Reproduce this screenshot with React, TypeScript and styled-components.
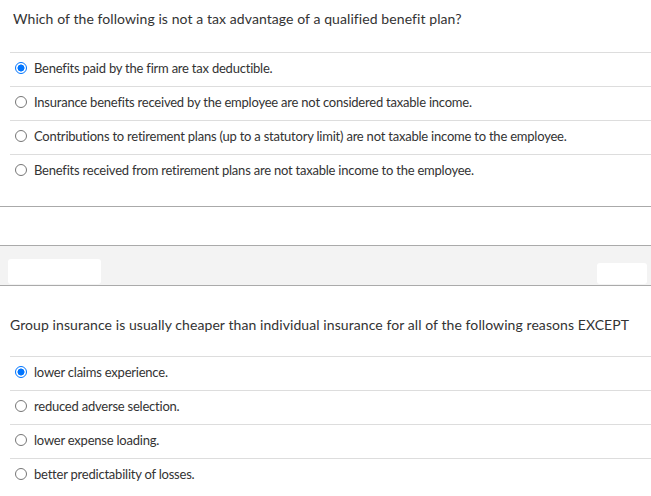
import styled, { createGlobalStyle } from "styled-components";

const Global = createGlobalStyle`
  body {
    margin: 0;
    background: #fff;
    font-family: Lato, "Open Sans", sans-serif;
    color: #333;
  }
`;

type Question = {
  text: string;
  options: string[];
  selected: number;
};

const questions: Question[] = [
  {
    text: "Which of the following is not a tax advantage of a qualified benefit plan?",
    options: [
      "Benefits paid by the firm are tax deductible.",
      "Insurance benefits received by the employee are not considered taxable income.",
      "Contributions to retirement plans (up to a statutory limit) are not taxable income to the employee.",
      "Benefits received from retirement plans are not taxable income to the employee.",
    ],
    selected: 0,
  },
  {
    text: "Group insurance is usually cheaper than individual insurance for all of the following reasons EXCEPT",
    options: [
      "lower claims experience.",
      "reduced adverse selection.",
      "lower expense loading.",
      "better predictability of losses.",
    ],
    selected: 0,
  },
];

export default function App() {
  const [first, second] = questions;
  return (
    <>
      <Global />
      <Page>
        <QuestionBlock question={first} indent={13} top={9} height={52} />
        <Spacer />
        <Band>
          <Redact $width={93} $height={25} />
          <Redact $width={50} $height={21} />
        </Band>
        <QuestionBlock question={second} indent={10} top={29} height={70} />
      </Page>
    </>
  );
}

const QuestionBlock = ({
  question,
  indent,
  top,
  height,
}: {
  question: Question;
  indent: number;
  top: number;
  height: number;
}) => (
  <Block>
    <Prompt $indent={indent} $top={top} $height={height}>
      {question.text}
    </Prompt>
    <Options>
      {question.options.map((opt, i) => (
        <Option key={opt}>
          <Radio $checked={i === question.selected} />
          <span>{opt}</span>
        </Option>
      ))}
    </Options>
  </Block>
);

const Page = styled.div`
  display: flex;
  flex-direction: column;
  width: 651px;
`;

const Block = styled.section`
  display: flex;
  flex-direction: column;
`;

const Prompt = styled.p<{ $indent: number; $top: number; $height: number }>`
  margin: 0;
  padding: ${(p) => p.$top}px 0 0 ${(p) => p.$indent}px;
  height: ${(p) => p.$height}px;
  box-sizing: border-box;
  font-size: 14px;
  letter-spacing: 0.08px;
  line-height: 20px;
  color: #333;
`;

const Options = styled.ul`
  list-style: none;
  margin: 0 0 0 10px;
  padding: 0;
  border-top: 1px solid #ddd;
`;

const Option = styled.li`
  display: flex;
  align-items: center;
  gap: 7px;
  height: 33px;
  box-sizing: border-box;
  padding: 0 0 4px 5px;
  font-size: 13px;
  letter-spacing: -0.22px;
  color: #333;
  & + & {
    height: 34px;
    border-top: 1px solid #ddd;
  }
`;

const Radio = styled.span<{ $checked: boolean }>`
  flex: none;
  width: 12px;
  height: 12px;
  box-sizing: border-box;
  border-radius: 50%;
  border: 1px solid ${(p) => (p.$checked ? "#0075ff" : "#767676")};
  background: ${(p) =>
    p.$checked ? "radial-gradient(circle, #0075ff 0 3.2px, #fff 3.8px)" : "#fff"};
`;

const Spacer = styled.div`
  height: 18px;
  margin-bottom: 38px;
  border-bottom: 1px solid #aaa;
`;

const Band = styled.div`
  display: flex;
  justify-content: space-between;
  align-items: flex-end;
  height: 38px;
  padding: 0 4px 1px 8px;
  background: #f3f3f3;
  border-top: 1px solid #aaa;
  border-bottom: 1px solid #aaa;
`;

const Redact = styled.div<{ $width: number; $height: number }>`
  width: ${(p) => p.$width}px;
  height: ${(p) => p.$height}px;
  background: #fff;
  border-radius: 3px;
`;
